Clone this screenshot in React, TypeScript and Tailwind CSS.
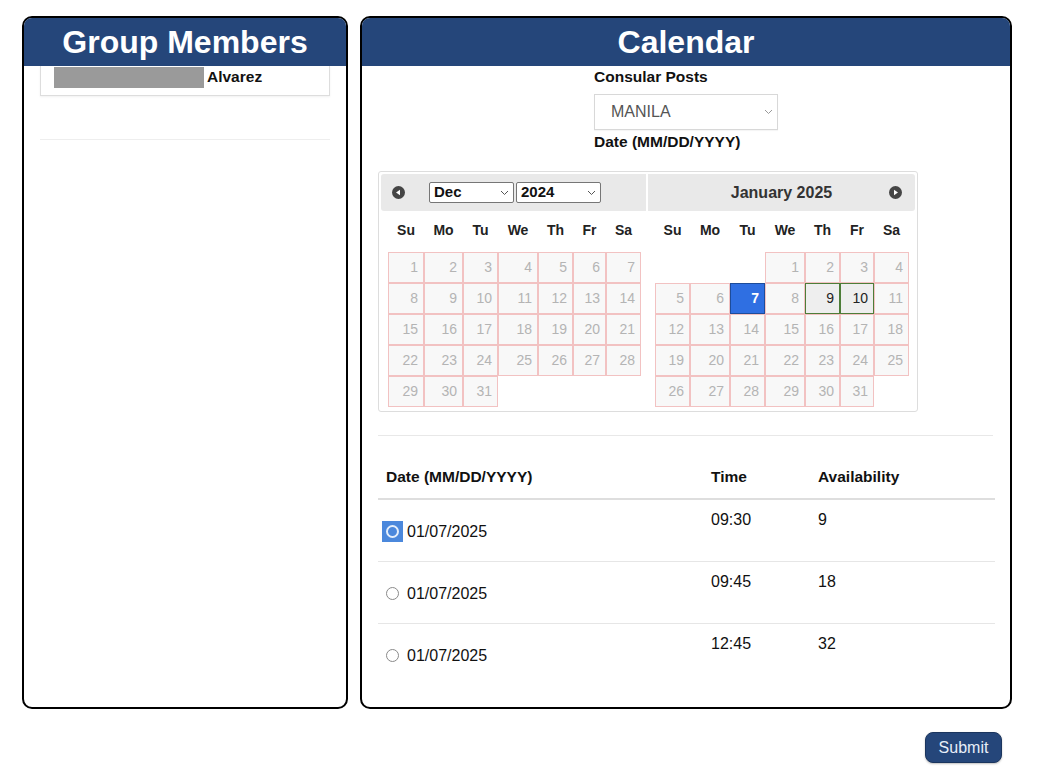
import React from 'react'

const NAVY = 'bg-[#25467a]'

type Special = { [day: number]: 'active' | 'open' }

const Chevron: React.FC<{ color?: string }> = ({ color = '#555' }) => (
  <svg width="9" height="6" viewBox="0 0 9 6" fill="none">
    <path d="M1 1l3.5 3.5L8 1" stroke={color} strokeWidth="1" />
  </svg>
)

const NavIcon: React.FC<{ dir: 'prev' | 'next' }> = ({ dir }) => (
  <svg width="13" height="13" viewBox="0 0 13 13">
    <circle cx="6.5" cy="6.5" r="6.5" fill="#454545" />
    {dir === 'prev' ? (
      <path d="M4 6.5L8 3.8v5.4z" fill="#fff" />
    ) : (
      <path d="M9 6.5L5 3.8v5.4z" fill="#fff" />
    )}
  </svg>
)

const Month: React.FC<{ lead: number; widths: number[]; special?: Special; offset: number }> = ({
  lead,
  widths,
  special = {},
  offset,
}) => {
  const cells: (number | null)[] = []
  for (let i = 0; i < lead; i++) cells.push(null)
  for (let d = 1; d <= 31; d++) cells.push(d)
  while (cells.length % 7) cells.push(null)
  const weeks: (number | null)[][] = []
  for (let i = 0; i < cells.length; i += 7) weeks.push(cells.slice(i, i + 7))
  const dows = ['Su', 'Mo', 'Tu', 'We', 'Th', 'Fr', 'Sa']

  return (
    <div style={{ marginLeft: offset }}>
      <div className="flex h-[38px] items-center text-[14px] font-bold text-[#222]">
        {dows.map((d, i) => (
          <div key={d} style={{ width: widths[i] }} className="text-center">
            {d}
          </div>
        ))}
      </div>
      <div className="mt-[3px] flex flex-col">
        {weeks.map((w, wi) => (
          <div key={wi} className="flex">
            {w.map((d, i) => {
              if (d === null) return <div key={i} style={{ width: widths[i] }} className="h-[31px]" />
              const kind = special[d]
              let cls = 'border-[#f2c2c2] bg-[#f8f8f8] text-[#b4b4b4]'
              if (kind === 'active') cls = 'border-[#1d4c9a] bg-[#2f6fe2] font-bold text-white'
              if (kind === 'open') cls = 'border-[#4d7d38] bg-[#eeeeee] text-[#222]'
              return (
                <div
                  key={i}
                  style={{ width: widths[i] }}
                  className={`flex h-[31px] items-center justify-end border pr-[5px] text-[14px] ${cls}`}
                >
                  {d}
                </div>
              )
            })}
          </div>
        ))}
      </div>
    </div>
  )
}

const Radio: React.FC<{ checked?: boolean }> = ({ checked }) =>
  checked ? (
    <div className="flex h-[21px] w-[21px] items-center justify-center bg-[#4b88dc]">
      <div className="h-[13px] w-[13px] rounded-full border-[2px] border-[#e4eefb] bg-[#4b88dc]" />
    </div>
  ) : (
    <div className="flex h-[21px] w-[21px] items-center justify-center">
      <div className="h-[13px] w-[13px] rounded-full border border-[#8a8a8a] bg-white" />
    </div>
  )

const slots = [
  { date: '01/07/2025', time: '09:30', avail: '9', checked: true },
  { date: '01/07/2025', time: '09:45', avail: '18' },
  { date: '01/07/2025', time: '12:45', avail: '32' },
]

export default function App() {
  return (
    <div className="h-[782px] w-[1042px] bg-white pl-[22px] pt-4 font-['Liberation_Sans',Arial,sans-serif] text-[#111]">
      <div className="flex w-[990px] gap-3">
        {/* Group members */}
        <div className="flex h-[693px] w-[326px] flex-col overflow-hidden rounded-[10px] border-2 border-black">
          <div className={`flex h-[48px] items-center justify-center ${NAVY} text-[32px] font-bold text-white`}>
            Group Members
          </div>
          <div className="px-4">
            <div className="flex h-[30px] items-start border border-t-0 border-[#dddddd] pl-[13px] shadow-[0_1px_2px_rgba(0,0,0,0.06)]">
              <div className="mt-[1px] h-[21px] w-[150px] bg-[#9a9a9a]" />
              <span className="ml-[3px] mt-[2px] text-[15.5px] font-bold leading-[18px]">Alvarez</span>
            </div>
            <div className="mt-[43px] border-t border-[#eeeeee]" />
          </div>
        </div>

        {/* Calendar */}
        <div className="flex h-[693px] w-[652px] flex-col overflow-hidden rounded-[10px] border-2 border-black">
          <div className={`flex h-[48px] items-center justify-center ${NAVY} text-[32px] font-bold text-white`}>
            Calendar
          </div>
          <div className="px-4">
            <div className="mx-auto w-[184px] pt-[2px]">
              <div className="text-[15.5px] font-bold leading-[18px]">Consular Posts</div>
              <div className="mt-[8px] flex h-[36px] items-center justify-between border border-[#d8d8d8] pl-[16px] pr-[4px] shadow-[0_1px_1px_rgba(0,0,0,0.04)]">
                <span className="text-[16px] text-[#555]">MANILA</span>
                <Chevron color="#999" />
              </div>
              <div className="mt-[3px] text-[15.5px] font-bold leading-[18px]">Date (MM/DD/YYYY)</div>
            </div>

            {/* Datepicker */}
            <div className="mt-[20px] flex h-[241px] w-[540px] gap-[2px] rounded-[3px] border border-[#dddddd] p-[2px]">
              <div className="w-[266px]">
                <div className="flex h-[37px] items-center rounded-l-[3px] bg-[#e9e9e9] pl-[11px]">
                  <NavIcon dir="prev" />
                  <div className="ml-[24px] flex h-[21px] w-[85px] items-center justify-between rounded-[2px] border border-[#767676] bg-white pl-[4px] pr-[4px] text-[15px] font-bold">
                    Dec
                    <Chevron />
                  </div>
                  <div className="ml-[2px] flex h-[21px] w-[85px] items-center justify-between rounded-[2px] border border-[#767676] bg-white pl-[4px] pr-[4px] text-[15px] font-bold">
                    2024
                    <Chevron />
                  </div>
                </div>
                <Month lead={0} widths={[36, 39, 35, 40, 35, 33, 35]} offset={7} />
              </div>
              <div className="w-[268px]">
                <div className="relative flex h-[37px] items-center justify-center rounded-r-[3px] bg-[#e9e9e9] text-[16px] font-bold text-[#333]">
                  January 2025
                  <div className="absolute right-[13px] top-[12px]">
                    <NavIcon dir="next" />
                  </div>
                </div>
                <Month
                  lead={3}
                  widths={[35, 40, 35, 40, 35, 34, 35]}
                  offset={7}
                  special={{ 7: 'active', 9: 'open', 10: 'open' }}
                />
              </div>
            </div>

            <div className="mt-[23px] w-[615px] border-t border-[#e8e8e8]" />

            {/* Slots table */}
            <div className="w-[617px]">
              <div className="mt-[25px] flex h-[39px] items-end border-b-2 border-[#dedede] pb-[12px] text-[15.5px] font-bold leading-[18px]">
                <div className="w-[325px] pl-2">Date (MM/DD/YYYY)</div>
                <div className="w-[107px] pl-2">Time</div>
                <div className="pl-2">Availability</div>
              </div>
              {slots.map((s, i) => (
                <div
                  key={i}
                  className={`flex h-[62px] text-[16px] leading-[18px] ${i < slots.length - 1 ? 'border-b border-[#e6e6e6]' : ''}`}
                >
                  <div className="flex w-[325px] items-center self-start pl-[4px] pt-[21px]">
                    <Radio checked={s.checked} />
                    <span className="ml-[4px]">{s.date}</span>
                  </div>
                  <div className="w-[107px] pl-2 pt-[11px]">{s.time}</div>
                  <div className="pl-2 pt-[11px]">{s.avail}</div>
                </div>
              ))}
            </div>
          </div>
        </div>
      </div>

      <div className="mt-[23px] flex w-[980px] justify-end">
        <button className={`h-[31px] w-[77px] rounded-[8px] border border-[#1b355e] ${NAVY} text-[16px] text-[#e8eef8] shadow-[0_1px_2px_rgba(0,0,0,0.25)]`}>
          Submit
        </button>
      </div>
    </div>
  )
}
